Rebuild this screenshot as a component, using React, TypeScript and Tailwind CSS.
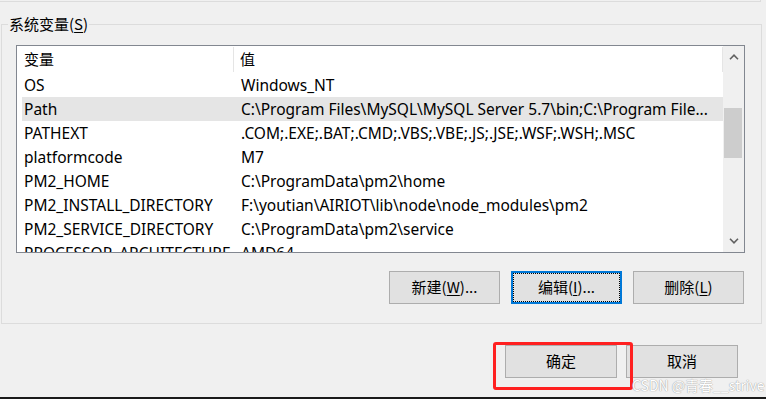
import React from "react";

interface EnvVar {
  name: string;
  value: string;
}

const vars: EnvVar[] = [
  { name: "OS", value: "Windows_NT" },
  { name: "Path", value: "C:\\Program Files\\MySQL\\MySQL Server 5.7\\bin;C:\\Program File..." },
  { name: "PATHEXT", value: ".COM;.EXE;.BAT;.CMD;.VBS;.VBE;.JS;.JSE;.WSF;.WSH;.MSC" },
  { name: "platformcode", value: "M7" },
  { name: "PM2_HOME", value: "C:\\ProgramData\\pm2\\home" },
  { name: "PM2_INSTALL_DIRECTORY", value: "F:\\youtian\\AIRIOT\\lib\\node\\node_modules\\pm2" },
  { name: "PM2_SERVICE_DIRECTORY", value: "C:\\ProgramData\\pm2\\service" },
  { name: "PROCESSOR_ARCHITECTURE", value: "AMD64" },
];

function Chevron({ up }: { up?: boolean }) {
  return (
    <svg width="10" height="6" viewBox="0 0 10 6">
      <path
        d={up ? "M1 5.2 L5 1.2 L9 5.2" : "M1 0.8 L5 4.8 L9 0.8"}
        fill="none"
        stroke="#606060"
        strokeWidth="1.6"
      />
    </svg>
  );
}

function WinButton({
  children,
  focused,
  className = "",
}: {
  children: React.ReactNode;
  focused?: boolean;
  className?: string;
}) {
  return (
    <button
      type="button"
      className={
        "h-[33px] flex items-center justify-center bg-[#e1e1e1] text-[15px] text-black " +
        (focused
          ? "border-2 border-[#0078d7] outline-1 outline-dotted outline-black -outline-offset-3 "
          : "border border-[#adadad] ") +
        className
      }
    >
      {children}
    </button>
  );
}

export default function App() {
  return (
    <div className="relative w-[766px] h-[399px] overflow-hidden bg-[#f0f0f0] border-b-2 border-[#1a1a1a] font-['Noto_Sans','Noto_Sans_CJK_SC',sans-serif] text-black">
      {/* bottom edge of the user variables box above */}
      <div className="h-[2px] w-[761px] border-b border-r border-[#dcdcdc]" />

      <fieldset className="mt-[12px] ml-[1px] w-[761px] border border-[#dcdcdc] pb-[19px]">
        <legend className="ml-[6px] px-[1px] text-[15px] leading-[20px] font-['Noto_Sans_CJK_SC',sans-serif]">
          系统变量(<span className="underline underline-offset-2">S</span>)
        </legend>

        <div className="mt-[11px] ml-[14px] w-[729px] h-[208px] border border-[#828790] bg-white flex">
          <div className="flex-1 overflow-hidden pl-[5px]">
            <div className="flex h-[27px] items-center text-[15px] font-['Noto_Sans_CJK_SC',sans-serif]">
              <div className="w-[212px] pl-[2px] h-[25px] flex items-center border-r border-[#e5e5e5]">变量</div>
              <div className="flex-1 pl-[6px] h-[25px] flex items-center border-r border-[#e5e5e5]">值</div>
            </div>
            {vars.map((v) => (
              <div
                key={v.name}
                className={
                  "flex h-[24px] pt-[2px] items-center text-[15.5px] whitespace-nowrap " +
                  (v.name === "Path" ? "bg-[#e5e5e5]" : "")
                }
              >
                <div className="w-[212px] pl-[2px] overflow-hidden">{v.name}</div>
                <div className="flex-1 pl-[7px] overflow-hidden">{v.value}</div>
              </div>
            ))}
          </div>
          <div className="w-[21px] bg-[#f0f0f0] flex flex-col">
            <div className="h-[22px] flex items-center justify-center">
              <Chevron up />
            </div>
            <div className="flex-1">
              <div className="mt-[40px] ml-[1px] w-[18px] h-[50px] bg-[#cdcdcd]" />
            </div>
            <div className="h-[22px] flex items-center justify-center">
              <Chevron />
            </div>
          </div>
        </div>

        <div className="mt-[18px] pr-[17px] flex justify-end gap-[11px] font-['Noto_Sans_CJK_SC',sans-serif]">
          <WinButton className="w-[111px]">
            新建(<span className="underline underline-offset-2">W</span>)...
          </WinButton>
          <WinButton className="w-[111px]" focused>
            编辑(<span className="underline underline-offset-2">I</span>)...
          </WinButton>
          <WinButton className="w-[111px]">
            删除(<span className="underline underline-offset-2">L</span>)
          </WinButton>
        </div>
      </fieldset>

      <div className="mt-[21px] pr-[28px] flex justify-end gap-[9px] font-['Noto_Sans_CJK_SC',sans-serif]">
        <WinButton className="w-[112px]">确定</WinButton>
        <WinButton className="w-[112px]">取消</WinButton>
      </div>

      {/* red annotation around the OK button */}
      <div className="absolute left-[493px] top-[342px] w-[140px] h-[48px] border-[3px] border-[#ff2020] rounded-[3px]" />

      <div className="absolute left-[632px] top-[376px] text-[14px] leading-[18px] text-white whitespace-nowrap font-['Noto_Sans_CJK_SC',sans-serif] [text-shadow:0_0_1px_#a0a0a0,0_0_1px_#a0a0a0]">
        CSDN @青春__strive
      </div>
    </div>
  );
}
